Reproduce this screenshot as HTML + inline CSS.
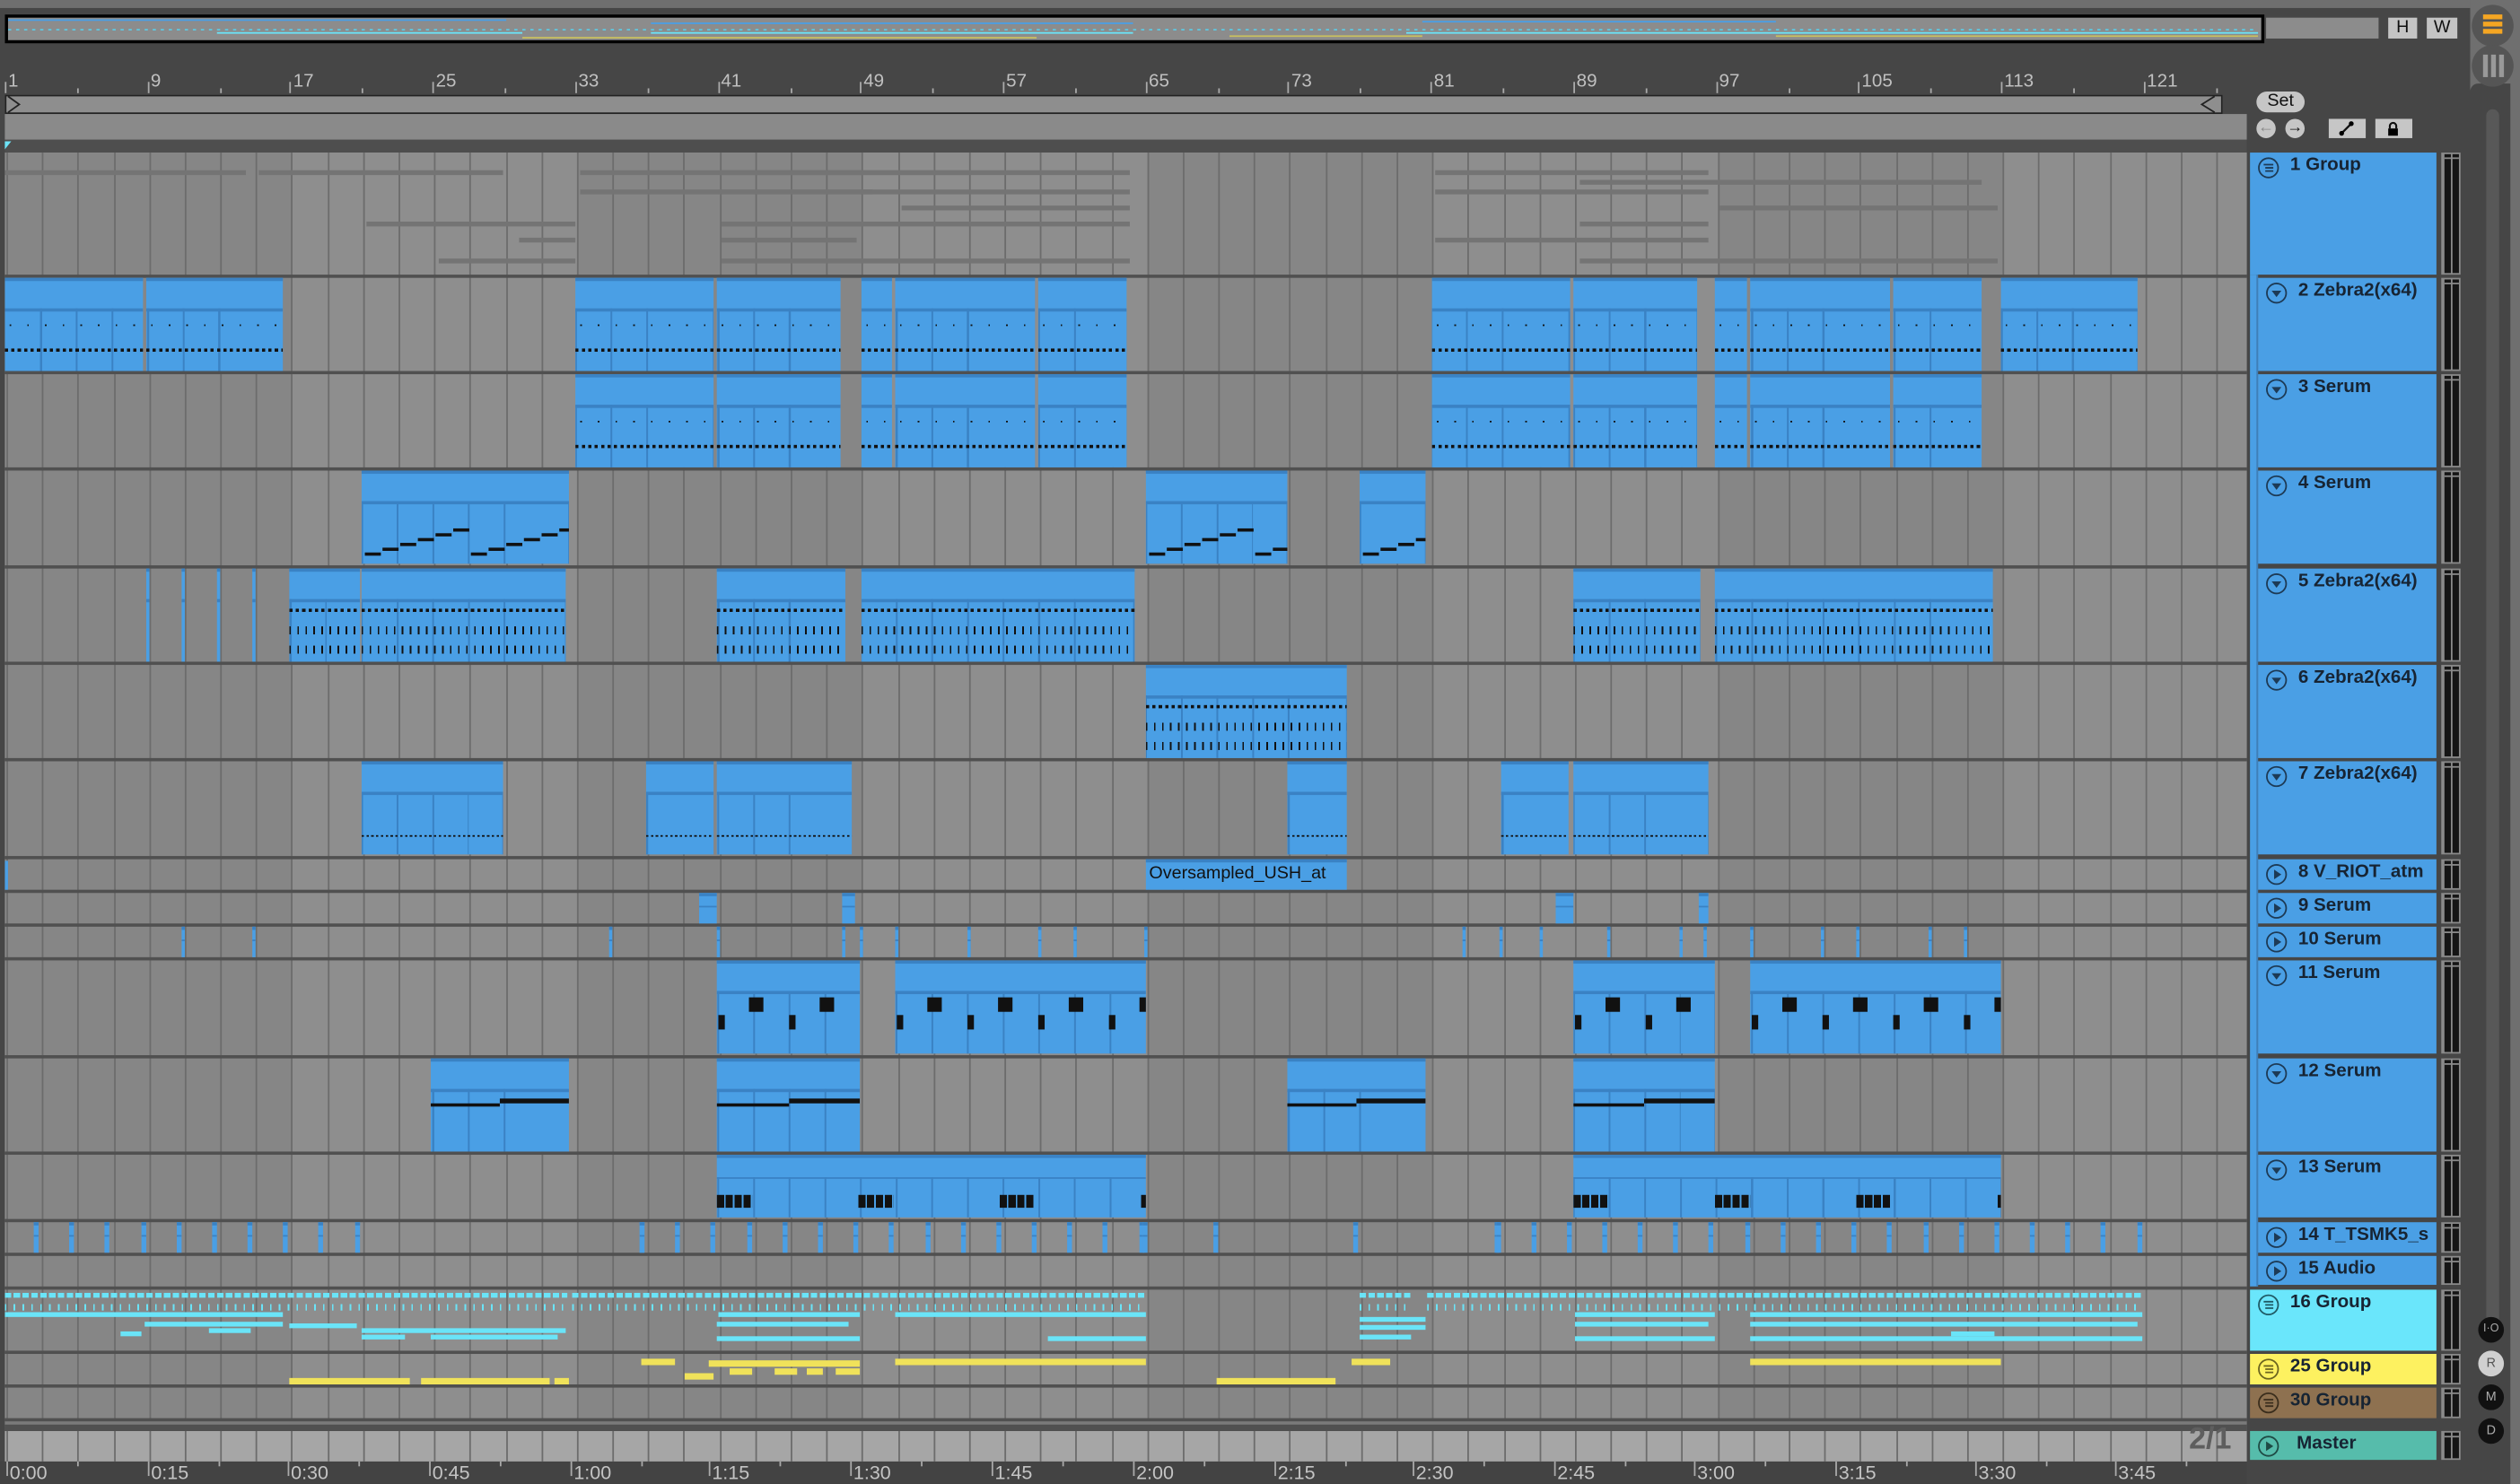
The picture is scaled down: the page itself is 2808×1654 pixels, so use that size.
<!DOCTYPE html>
<html><head><meta charset="utf-8">
<style>
html,body{margin:0;padding:0;background:#464646;overflow:hidden;width:2808px;height:1654px}
#s{position:absolute;left:0;top:0;width:1568px;height:924px;transform-origin:0 0;transform:scale(1.79082,1.79004);background:#464646;font-family:"Liberation Sans",sans-serif}
.a{position:absolute;box-sizing:border-box}
.hd{position:absolute;box-sizing:border-box;font-weight:bold;font-size:11.5px;color:#172433;padding-left:25px;padding-top:2px;white-space:nowrap;overflow:hidden}
.ic{position:absolute;left:5px;top:3px;width:13px;height:13px;border:1.3px solid #1d3a55;border-radius:50%;box-sizing:border-box}
</style></head><body>
<div id="s">
<div class="a" style="left:1537px;top:0;width:31px;height:924px;background:#6f6f6f"></div>
<div class="a" style="left:1537px;top:52px;width:25px;height:872px;background:#464646;border-radius:5px 0 0 0"></div>
<div class="a" style="left:0;top:0;width:1537px;height:5px;background:#6f6f6f"></div>
<div class="a" style="left:0;top:5px;width:1537px;height:919px;background:#464646;border-radius:0 6px 0 0"></div>
<div class="a" style="left:1538px;top:3px;width:26px;height:26px;border-radius:50%;background:#555"></div>
<div class="a" style="left:1545px;top:9px;width:12px;height:2.5px;background:#f5a623;box-shadow:0 4.5px 0 #f5a623,0 9px 0 #f5a623"></div>
<div class="a" style="left:1538px;top:28px;width:26px;height:26px;border-radius:50%;background:#555"></div>
<div class="a" style="left:1545px;top:34px;width:3px;height:14px;background:#999;box-shadow:5px 0 0 #999,10px 0 0 #999"></div>
<div class="a" style="left:1547px;top:68px;width:8px;height:760px;background:#585858;border-radius:4px"></div>
<div class="a" style="left:1542px;top:820px;width:16px;height:16px;border-radius:50%;background:#111;color:#aaa;font-size:7px;text-align:center;line-height:16px">I·O</div>
<div class="a" style="left:1542px;top:841px;width:16px;height:16px;border-radius:50%;background:#d0d0d0;color:#555;font-size:8px;text-align:center;line-height:16px">R</div>
<div class="a" style="left:1542px;top:862px;width:16px;height:16px;border-radius:50%;background:#111;color:#aaa;font-size:8px;text-align:center;line-height:16px">M</div>
<div class="a" style="left:1542px;top:883px;width:16px;height:16px;border-radius:50%;background:#111;color:#aaa;font-size:8px;text-align:center;line-height:16px">D</div>

<div class="a" style="left:3px;top:9px;width:1406px;height:18px;border:2px solid #000;background:#8c8c8c"></div>
<div class="a" id="ov" style="left:5px;top:11px;width:1402px;height:14px;overflow:hidden"></div>
<div class="a" style="left:1410px;top:11px;width:70px;height:13px;background:#8c8c8c"></div>
<div class="a" style="left:1486px;top:11px;width:18px;height:13px;background:#c4c4c4;font-size:11px;text-align:center;line-height:13px;color:#111">H</div>
<div class="a" style="left:1510px;top:11px;width:19px;height:13px;background:#c4c4c4;font-size:11px;text-align:center;line-height:13px;color:#111">W</div>

<div class="a" style="left:3px;top:59px;width:1380px;height:12px;border:1.5px solid #222;background:#8e8e8e"></div>
<svg class="a" style="left:4px;top:59px" width="10" height="12"><path d="M1 1 L8 6 L1 11" fill="none" stroke="#222" stroke-width="1"/></svg>
<svg class="a" style="left:1367px;top:59px" width="12" height="12"><path d="M11 1 L3 6 L11 11" fill="none" stroke="#222" stroke-width="1"/></svg>
<div class="a" style="left:3px;top:71px;width:1395px;height:16px;background:#8a8a8a"></div>
<div class="a" style="left:3px;top:87px;width:1395px;height:8px;background:#4e4e4e"></div>
<div class="a" style="left:3px;top:88px;width:0;height:0;border-left:4px solid #6de3f7;border-bottom:5px solid transparent"></div>

<div class="a" style="left:1404px;top:57px;width:30px;height:13px;border-radius:7px;background:#c6c6c6;font-size:11px;text-align:center;line-height:13px;color:#111">Set</div>
<div class="a" style="left:1404px;top:74px;width:12px;height:12px;border-radius:50%;background:#c6c6c6;font-size:10px;text-align:center;line-height:12px;color:#888">&#x2190;</div>
<div class="a" style="left:1422px;top:74px;width:12px;height:12px;border-radius:50%;background:#c6c6c6;font-size:10px;text-align:center;line-height:12px;color:#111;font-weight:bold">&#x2192;</div>
<div class="a" style="left:1449px;top:74px;width:23px;height:12px;background:#c6c6c6"></div>
<svg class="a" style="left:1455px;top:75px" width="10" height="10"><path d="M2 8 L8 2" stroke="#111" stroke-width="1.3"/><circle cx="2" cy="8" r="1.5"/><circle cx="8" cy="2" r="1.5"/></svg>
<div class="a" style="left:1478px;top:74px;width:23px;height:12px;background:#c6c6c6"></div>
<svg class="a" style="left:1484px;top:75px" width="10" height="10"><path d="M3 5 V3.5 a2 2 0 0 1 4 0 V5" fill="none" stroke="#111" stroke-width="1.2"/><rect x="2" y="5" width="6" height="4.5"/></svg>

<div id="arr" class="a" style="left:3px;top:95px;width:1395px;height:815px;overflow:hidden;background:#8a8a8a"></div>
<div id="heads"></div>
<div class="a" style="left:0;top:910px;width:1398px;height:14px;background:#434343"></div>
<div class="a" style="left:1362px;top:886px;font-size:19px;font-weight:bold;color:#5e5e5e">2/1</div>
</div>
<script>
const S=document.getElementById('s');
function d(p,css,html){const e=document.createElement('div');e.className='a';e.style.cssText=css;if(html)e.innerHTML=html;p.appendChild(e);return e;}
const bx=b=>4+(b-1)*11.09;
[1,9,17,25,33,41,49,57,65,73,81,89,97,105,113,121].forEach(n=>{const x=bx(n);
 d(S,`left:${x+1}px;top:45px;font-size:11.5px;color:#c0c0c0`,String(n));
 d(S,`left:${x-1}px;top:51px;width:1px;height:7px;background:#aaa`);
 d(S,`left:${x+44}px;top:55px;width:1px;height:3px;background:#aaa`);});
[['0:00',4],['0:15',92],['0:30',179],['0:45',267],['1:00',355],['1:15',441],['1:30',529],['1:45',617],['2:00',705],['2:15',793],['2:30',879],['2:45',967],['3:00',1054],['3:15',1142],['3:30',1229],['3:45',1316]].forEach(([t,x])=>{
 d(S,`left:${x+2}px;top:910px;font-size:12px;color:#c4c4c4`,t);
 d(S,`left:${x}px;top:910px;width:1px;height:9px;background:#aaa`);
 d(S,`left:${x+44}px;top:910px;width:1px;height:3px;background:#aaa`);});
const A=document.getElementById('arr');
const rows=[[95,171,'1 Group','g'],[173,231,'2 Zebra2(x64)','m'],[233,291,'3 Serum','m'],[293,351,'4 Serum','m'],[354,412,'5 Zebra2(x64)','m'],[414,472,'6 Zebra2(x64)','m'],[474,532,'7 Zebra2(x64)','m'],[535,554,'8 V_RIOT_atm','a'],[556,575,'9 Serum','a'],[577,596,'10 Serum','a'],[598,656,'11 Serum','m'],[659,717,'12 Serum','m'],[719,758,'13 Serum','m'],[761,780,'14 T_TSMK5_s','a'],[782,800,'15 Audio','a'],[803,841,'16 Group','c'],[843,862,'25 Group','y'],[864,883,'30 Group','b'],[891,909,'Master','M']];
for(let k=0;k<8;k++){d(A,`left:${bx(1+16*k)-3}px;top:0;width:177.4px;height:815px;background:${k%2?'#8e8e8e':'#868686'}`);}
d(A,`left:0;top:796px;width:1395px;height:19px;background:#a6a6a6`);
for(let b=1;b<130;b+=2){d(A,`left:${bx(b)-3}px;top:0;width:1px;height:815px;background:#6c6c6c`);}
rows.forEach((r,i)=>{if(i>0)d(A,`left:0;top:${r[0]-95-2}px;width:1395px;height:2px;background:#505050`);});
d(A,`left:0;top:788px;width:1395px;height:8px;background:#505050`);
d(A,`left:0;top:790px;width:1395px;height:2px;background:#7a7a7a`);
[[0,150,8],[158,310,8],[358,600,8],[446,700,8],[890,1060,8],[358,540,20],[446,700,20],[890,1060,20],[225,355,40],[446,700,40],[980,1060,40],[980,1230,14],[320,355,50],[446,530,50],[890,1060,50],[270,355,63],[446,700,63],[980,1240,63],[558,700,30],[1067,1240,30]].forEach(([a,b,y])=>d(A,`left:${a}px;top:${y+3}px;width:${b-a}px;height:3px;background:#747474`));
function clip(x1,x2,r,kind){const y=rows[r][0]-95, h=rows[r][1]-rows[r][0];
 const e=d(A,`left:${x1-3}px;top:${y}px;width:${x2-x1}px;height:${h}px;background:#4a9fe5;border-top:2px solid #3a82c4;overflow:hidden`);
 e.innerHTML=`<div style="position:absolute;left:0;top:${h*0.3}px;width:100%;height:1.5px;background:#3a82c4"></div><div style="position:absolute;left:0;top:${h*0.3}px;width:100%;height:100%;background:repeating-linear-gradient(90deg,transparent 0 ${22.18-1.2}px,#3a82c4 ${22.18-1.2}px 22.18px);background-position:${-(x1-4)%22.18}px 0"></div>`;
 const N=(css)=>d(e,css);
 if(kind==1){N(`left:0;top:${h*0.72}px;width:100%;height:2px;background:repeating-linear-gradient(90deg,#111 0 2px,transparent 2px 4px)`);N(`left:3px;top:${h*0.47}px;width:100%;height:1px;background:repeating-linear-gradient(90deg,#111 0 1px,transparent 1px 11px)`);}
 if(kind==2){for(let i=0;i<(x2-x1)/11;i++)N(`left:${i*11+2}px;top:${h*0.85-((i%6)*3)}px;width:10px;height:2px;background:#111`);}
 if(kind==3){N(`left:0;top:${h*0.4}px;width:100%;height:2px;background:repeating-linear-gradient(90deg,#111 0 2px,transparent 2px 4px)`);N(`left:0;top:${h*0.58}px;width:100%;height:5px;background:repeating-linear-gradient(90deg,#111 0 1px,transparent 1px 5px)`);N(`left:0;top:${h*0.8}px;width:100%;height:5px;background:repeating-linear-gradient(90deg,#111 0 1px,transparent 1px 5px)`);}
 if(kind==4){N(`left:0;top:${h*0.75}px;width:100%;height:1.5px;background:repeating-linear-gradient(90deg,#111 0 1.5px,transparent 1.5px 3px)`);}
 if(kind==5){for(let i=0;i<(x2-x1)/44;i++){N(`left:${i*44+1}px;top:${h*0.55}px;width:4px;height:9px;background:#111`);N(`left:${i*44+20}px;top:${h*0.36}px;width:9px;height:9px;background:#111`);}}
 if(kind==6){N(`left:0;top:${h*0.45}px;width:50%;height:2px;background:#111`);N(`left:50%;top:${h*0.4}px;width:50%;height:3px;background:#111`);}
 if(kind==7){for(let i=0;i<(x2-x1)/88;i++)N(`left:${i*88}px;top:${h*0.58}px;width:22px;height:8px;background:repeating-linear-gradient(90deg,#111 0 4.5px,#4a9fe5 4.5px 5.5px)`);}
 return e;}
[[3,89],[91,176],[358,444],[446,523],[536,555],[557,644],[646,701],[891,977],[979,1056],[1067,1087],[1089,1176],[1178,1233],[1245,1330]].forEach(c=>clip(c[0],c[1],1,1));
[[358,444],[446,523],[536,555],[557,644],[646,701],[891,977],[979,1056],[1067,1087],[1089,1176],[1178,1233]].forEach(c=>clip(c[0],c[1],2,1));
[[225,354],[713,801],[846,887]].forEach(c=>clip(c[0],c[1],3,2));
[[180,224],[225,352],[446,526],[536,706],[979,1058],[1067,1240]].forEach(c=>clip(c[0],c[1],4,3));
[91,113,135,157].forEach(x=>clip(x,x+2,4,0));
clip(713,838,5,3);
[[225,313],[402,444],[446,530],[801,838],[934,976],[979,1063]].forEach(c=>clip(c[0],c[1],6,4));
const c8=clip(713,838,7,0);c8.innerHTML='<div style="position:absolute;left:2px;top:1px;font-size:11px;color:#111;white-space:nowrap">Oversampled_USH_at</div>';
d(A,`left:0;top:441px;width:2px;height:18px;background:#4a9fe5`);
[[435,446],[968,979],[524,532],[1057,1063]].forEach(c=>clip(c[0],c[1],8,0));
[113,157,379,446,524,535,557,602,646,668,712,910,933,958,1000,1045,1060,1089,1133,1155,1200,1222].forEach(x=>clip(x,x+2,9,0));
[[446,535],[557,713],[979,1067],[1089,1245]].forEach(c=>clip(c[0],c[1],10,5));
[[268,354],[446,535],[801,887],[979,1067]].forEach(c=>clip(c[0],c[1],11,6));
[[446,713],[979,1245]].forEach(c=>clip(c[0],c[1],12,7));
for(let x=21;x<1340;x+=22.18){if((x>230&&x<395)||(x>720&&x<930))continue;clip(x,x+3,13,0);}
[398,711,755,842,931].forEach(x=>clip(x,x+3,13,0));
const cy='#6ae4f8';
const L=(a,b,y,h,c)=>d(A,`left:${a-3}px;top:${y-95}px;width:${b-a}px;height:${h}px;background:${c}`);
[[3,353],[356,713],[846,878],[888,1333]].forEach(([a,b])=>{L(a,b,805,3,`repeating-linear-gradient(90deg,${cy} 0 4px,transparent 4px 5.5px)`);L(a,b,812,4,`repeating-linear-gradient(90deg,${cy} 0 1px,transparent 1px 5.5px)`);});
[[3,176,817],[447,535,817],[980,1067,817],[557,713,817],[1089,1333,817],[90,176,823],[180,222,824],[225,352,827],[446,528,823],[980,1063,823],[1089,1330,823],[268,347,831],[846,887,825],[225,252,831],[446,535,832],[980,1067,832],[1089,1333,832],[846,878,831],[75,88,829],[130,156,827],[1214,1241,829],[652,713,832],[846,887,820]].forEach(([a,b,y])=>L(a,b,y,3,cy));
const yl='#f0e25a';
[[180,255,858],[262,342,858],[345,354,858],[399,420,846],[441,535,847],[426,444,855],[454,468,852],[482,496,852],[502,512,852],[520,535,852],[557,713,846],[757,831,858],[841,865,846],[1089,1245,846]].forEach(([a,b,y])=>L(a,b,y,3.5,yl));
const O=document.getElementById('ov');
for(let i=0;i<1400;i+=5){d(O,`left:${i}px;top:7px;width:2px;height:1px;background:#5fc8e0`);}
[[0,310,1,'#4a9fe5'],[400,700,3,'#4a9fe5'],[880,1100,2,'#4a9fe5'],[130,320,9,'#6ae4f8'],[400,700,9,'#6ae4f8'],[870,1400,9,'#6ae4f8'],[320,640,12,'#c8c060'],[760,880,11,'#c8c060'],[1100,1400,11,'#c8c060']].forEach(([a,b,y,c])=>d(O,`left:${a}px;top:${y}px;width:${b-a}px;height:1px;background:${c}`));
const H=document.getElementById('heads');
const col={g:'#4a9fe5',m:'#4a9fe5',a:'#4a9fe5',c:'#6ae6fb',y:'#fdf160',b:'#8e7150',M:'#56bcab'};
rows.forEach(([y1,y2,name,k],i)=>{
 const child=(i>=1&&i<=14);
 const left=child?1405:1400;
 const h=d(H,`left:${left}px;top:${y1}px;width:${1516-left}px;height:${y2-y1}px;background:${col[k]}`);
 h.className='hd';
 const isGroup=(k=='g'||k=='c'||k=='y'||k=='b');
 const icClr=k=='y'?'#6b6420':k=='b'?'#3a2d1c':k=='c'?'#1f5b66':k=='M'?'#1e4a44':'#1d3a55';
 let glyph=isGroup?`<svg width="13" height="13" style="position:absolute;left:-1.3px;top:-1.3px"><path d="M3.5 4.5H9.5M4.5 6.5H9.5M4.5 8.5H9.5" stroke="${icClr}" stroke-width="1"/></svg>`:
  (k=='m'?`<svg width="13" height="13" style="position:absolute;left:-1.3px;top:-1.3px"><path d="M3.5 5H9.5L6.5 9Z" fill="${icClr}"/></svg>`:`<svg width="13" height="13" style="position:absolute;left:-1.3px;top:-1.3px"><path d="M5 3.5V9.5L9.5 6.5Z" fill="${icClr}"/></svg>`);
 h.innerHTML=`<div class="ic" style="border-color:${icClr}">${glyph}</div>${name}`;
 if(k=='M')h.style.paddingLeft='29px';
 d(H,`left:1519px;top:${y1}px;width:12px;height:${y2-y1}px;background:#8a8a8a`);
 d(H,`left:1521px;top:${y1+1}px;width:3.5px;height:${y2-y1-2}px;background:#151515`);
 d(H,`left:1526px;top:${y1+1}px;width:3.5px;height:${y2-y1-2}px;background:#151515`);
 d(H,`left:1521px;top:${y1+3}px;width:8.5px;height:1px;background:#8a8a8a`);
});
d(H,`left:1400px;top:171px;width:5px;height:630px;background:#4a9fe5`);
d(H,`left:1404px;top:171px;width:1px;height:630px;background:#3f7fb8`);
</script>
</body></html>
